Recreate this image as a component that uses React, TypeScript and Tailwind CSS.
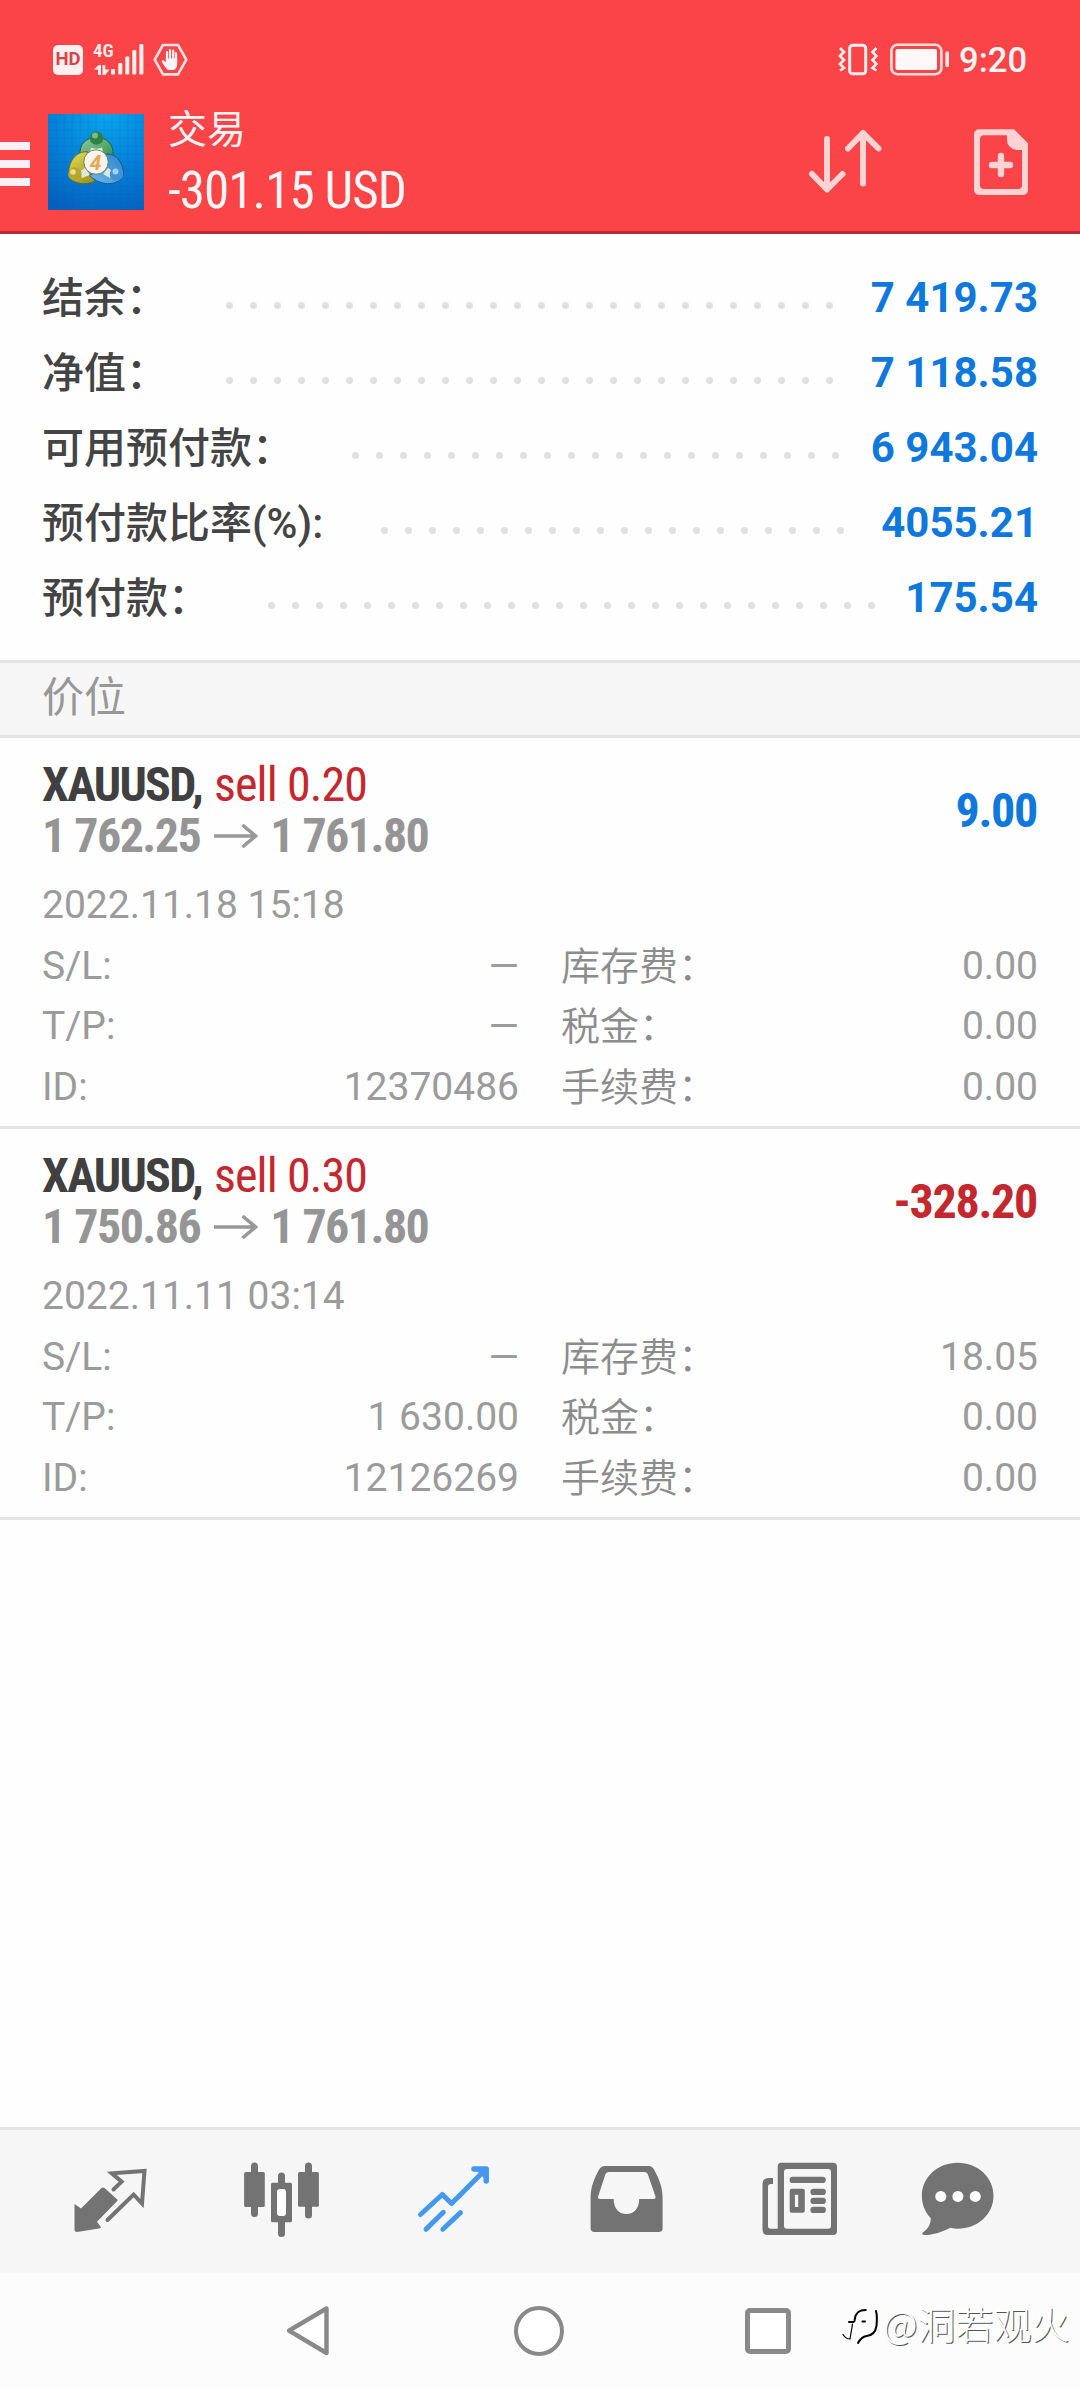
import type { ReactNode } from "react";

const summary = [
    { label: "结余：", value: "7 419.73", dots: 26 },
    { label: "净值：", value: "7 118.58", dots: 26 },
    { label: "可用预付款：", value: "6 943.04", dots: 21 },
    { label: "预付款比率(%):", value: "4055.21", dots: 20 },
    { label: "预付款：", value: "175.54", dots: 26 },
];

const positions = [
    {
        symbol: "XAUUSD,",
        action: "sell 0.20",
        open: "1 762.25",
        current: "1 761.80",
        profit: "9.00",
        time: "2022.11.18 15:18",
        left: [
            ["S/L:", "—"],
            ["T/P:", "—"],
            ["ID:", "12370486"],
        ],
        right: [
            ["库存费：", "0.00"],
            ["税金：", "0.00"],
            ["手续费：", "0.00"],
        ],
    },
    {
        symbol: "XAUUSD,",
        action: "sell 0.30",
        open: "1 750.86",
        current: "1 761.80",
        profit: "-328.20",
        time: "2022.11.11 03:14",
        left: [
            ["S/L:", "—"],
            ["T/P:", "1 630.00"],
            ["ID:", "12126269"],
        ],
        right: [
            ["库存费：", "18.05"],
            ["税金：", "0.00"],
            ["手续费：", "0.00"],
        ],
    },
];

function StatusBar() {
    return (
        <div className="flex h-[76px] pt-[43px] pl-[53px] pr-[53px]">
            <div className="mt-[2px] flex h-[30px] w-[30px] items-center justify-center rounded-[5px] bg-[#fff0f0] text-[18.5px] font-bold text-[#d8434a]">
                HD
            </div>
            <div className="ml-[10px] flex w-[18px] flex-col items-start">
                <span className="h-[20px] font-['Roboto_Condensed'] text-[19px] leading-[15px] font-semibold text-[#ffecec]">4G</span>
                <svg className="mt-[1px] ml-[1px]" width="16" height="12" viewBox="0 0 16 12" fill="#ffecec">
                    <path d="M0 5.5 4.6 1H7v10H4V5.5zM8.500 1h2.800v4.500H15.500L11.300 11H8.500z" />
                </svg>
            </div>
            <svg width="33" height="32" viewBox="0 0 33 32" fill="#fff0f0">
                <rect x="0" y="26" width="4" height="5.500" rx="1" />
                <rect x="7.300" y="20" width="4" height="11.500" rx="1" />
                <rect x="14.300" y="13.500" width="4" height="18" rx="1" />
                <rect x="21.300" y="7" width="4" height="24.500" rx="1" />
                <rect x="28.400" y="1" width="4" height="30.500" rx="1" />
            </svg>
            <svg className="ml-[9px]" width="35" height="33" viewBox="0 0 35 33" fill="none">
                <path d="M10 2h15l8.300 14.700L25 31.400H10L1.700 16.700z" stroke="#ffe3e3" strokeWidth="2.600" strokeLinejoin="round" />
                <path d="M14 9v9M17 7v10M20.200 7.500v10M23 10v9" stroke="#fff5f5" strokeWidth="2.200" strokeLinecap="round" />
                <path d="M12.800 15.500h11.400V21c0 3.400-1.800 6-4.200 6h-4.200c-2.200-.3-4.300-3.500-7-8.200-.5-1 1-2.200 2-1.300l2 1.900z" fill="#fff5f5" />
            </svg>
            <div className="grow" />
            <svg width="40" height="33" viewBox="0 0 40 33" fill="none" stroke="#fff0f0">
                <rect x="11.700" y="2.200" width="16" height="28.500" rx="3" strokeWidth="3" />
                <path d="M2 6l4 4-4 4 4 4-4 4 4 4-4 2.500M38.500 6l-4 4 4 4-4 4 4 4-4 4 4 2.500" transform="translate(0 -1)" strokeWidth="2.600" />
            </svg>
            <svg className="ml-[12px]" width="60" height="33" viewBox="0 0 60 33" fill="none">
                <rect x="1.400" y="1.800" width="50" height="29.400" rx="6" stroke="#ffdede" strokeWidth="2.600" />
                <rect x="5.500" y="6" width="41.500" height="21" rx="2" fill="#fff8f8" />
                <path d="M57.200 10v12.500" stroke="#ffe6e6" strokeWidth="3.600" strokeLinecap="round" />
            </svg>
            <span className="ml-[9px] text-[34.5px] leading-[35px] font-medium">9:20</span>
        </div>
    );
}

function AppLogo() {
    return (
        <svg className="mt-[38px] ml-[18px] shrink-0" width="96" height="96" viewBox="0 0 96 96">
            <defs>
                <radialGradient id="sky" cx="0.6" cy="0" r="1.1">
                    <stop offset="0" stopColor="#0aa6ee" />
                    <stop offset="0.5" stopColor="#0682d8" />
                    <stop offset="1" stopColor="#0560bd" />
                </radialGradient>
                <linearGradient id="green" x1="0" y1="0" x2="1" y2="1">
                    <stop offset="0" stopColor="#8ccba4" />
                    <stop offset="1" stopColor="#2b8a41" />
                </linearGradient>
                <linearGradient id="yellow" x1="0" y1="0" x2="0.6" y2="1">
                    <stop offset="0" stopColor="#e6df58" />
                    <stop offset="1" stopColor="#a19a1c" />
                </linearGradient>
                <linearGradient id="blue" x1="1" y1="0" x2="0" y2="1">
                    <stop offset="0" stopColor="#2f83c8" />
                    <stop offset="1" stopColor="#6cb9ea" />
                </linearGradient>
            </defs>
            <rect width="96" height="96" fill="url(#sky)" />
            <path d="M8 0v96M16 0v96M24 0v96M32 0v96M40 0v96M48 0v96M56 0v96M64 0v96M72 0v96M80 0v96M88 0v96M0 8h96M0 16h96M0 24h96M0 32h96M0 40h96M0 48h96M0 56h96M0 64h96M0 72h96M0 80h96M0 88h96" stroke="#0a5fae" strokeOpacity="0.15" />
            <path d="M32 42C31 30 38 23.500 48.500 23.500S66 30 65 42L56 50H40z" fill="url(#green)" stroke="#1d6146" strokeWidth="1" />
            <path d="M40 38C28 36 19 49 21 62c3 8 17 10 26 5l-6-12z" fill="url(#yellow)" stroke="#5d6a25" strokeWidth="1" />
            <path d="M58 40c11-1 18 11 17.500 21C72 71 54 74 41 61l15-5z" fill="url(#blue)" stroke="#195a97" strokeWidth="1" />
            <path d="M43 33.500c3 1.500 8 1.500 11 0l1 4H42z" fill="#dcebd0" />
            <path d="M31 58l6-4 5 7-8 3zM66 58l-6-4-5 6 7 4z" fill="#dce9dc" />
            <circle cx="48.500" cy="24" r="6.800" fill="#2e8246" />
            <circle cx="47" cy="21.500" r="3" fill="#7dba86" />
            <circle cx="27" cy="60" r="6.800" fill="#b8a62c" />
            <circle cx="25" cy="58" r="2.800" fill="#ebe08a" />
            <circle cx="68.500" cy="60" r="6.800" fill="#4292d6" />
            <circle cx="67.500" cy="57.500" r="3" fill="#9dd2f3" />
            <circle cx="48" cy="48" r="12.200" fill="#f8f4ef" stroke="#5a6b4a" strokeWidth="0.800" />
            <text x="47.500" y="55.500" textAnchor="middle" fontSize="21" fontWeight="700" fontStyle="italic" fontFamily="Roboto" fill="#eda552">
                4
            </text>
        </svg>
    );
}

function Header() {
    return (
        <header className="h-[234px] border-b-[3px] border-[#b62c33] bg-[#fa4448] text-[#fff5f5]">
            <StatusBar />
            <div className="flex">
                <div className="mt-[66px] flex w-[30px] flex-col gap-[10px]">
                    <div className="h-[8px] bg-[#fbeff8]" />
                    <div className="h-[8px] bg-[#fbeff8]" />
                    <div className="h-[8px] bg-[#fbeff8]" />
                </div>
                <AppLogo />
                <div className="mt-[25px] ml-[24px] grow">
                    <div className="text-[39px] leading-[58px]">交易</div>
                    <div className="mt-[3px] font-['Roboto_Condensed'] text-[51px] leading-[58px] tracking-[-0.9px]">-301.15 USD</div>
                </div>
                <svg className="mt-[52px]" width="76" height="68" viewBox="0 0 76 68" fill="none" stroke="#ffd2d3" strokeWidth="6" strokeLinecap="round" strokeLinejoin="round">
                    <path d="M20 11v50M5 46l15 15.500L35.500 46M56 55.500V6M41 20.500L56 5l15.500 15.500" />
                </svg>
                <svg className="mt-[52px] mr-[50px] ml-[89px]" width="58" height="70" viewBox="0 0 58 70">
                    <path fillRule="evenodd" fill="#ffd2d3" d="M7 1.300h35L56 15.300V62a5 5 0 0 1-5 5H7a5 5 0 0 1-5-5V6.300a5 5 0 0 1 5-5zM12 7.300a4 4 0 0 0-4 4V57a4 4 0 0 0 4 4h34a4 4 0 0 0 4-4V22h-5A10 10 0 0 1 35 12V7.300z" />
                    <path d="M29 28v18M20 37h18" stroke="#ffd2d3" strokeWidth="6.400" strokeLinecap="round" />
                </svg>
            </div>
        </header>
    );
}

function Position({ item }: { item: (typeof positions)[number] }) {
    return (
        <section className="h-[391px] border-b-[3px] border-[#e4e4e4] px-[42px] pt-[21px] text-[#959595]">
            <div className="flex items-center justify-between font-['Roboto_Condensed'] text-[48px] leading-[51px] font-bold">
                <div>
                    <div className="flex gap-[12px] text-[#404040] tracking-[-1.7px]">
                        <span>{item.symbol}</span>
                        <span className="font-normal tracking-[-0.9px] text-[#c4272d]">{item.action}</span>
                    </div>
                    <div className="flex items-center tracking-[-1.55px]">
                        {item.open}
                        <svg className="mr-[11px] ml-[13px]" width="46" height="26" viewBox="0 0 46 26" fill="none" stroke="#999" strokeWidth="3.600">
                            <path d="M1 13h41M29.500 2l13 11-13 11" />
                        </svg>
                        {item.current}
                    </div>
                </div>
                <div className={item.profit.startsWith("-") ? "mr-[1px] tracking-[-1.3px] text-[#c4272d]" : "mr-[1px] tracking-[-1.3px] text-[#0e78dc]"}>
                    {item.profit}
                </div>
            </div>
            <div className="mt-[14px] text-[39px] text-[#9b9b9b]">
                <div className="leading-[60.5px]">{item.time}</div>
                <div className="grid grid-cols-2 gap-x-[42px] leading-[60.5px]">
                    <div>
                        {item.left.map(([label, value]) => (
                            <div key={label} className="flex h-[60.5px] justify-between">
                                <span>{label}</span>
                                <span>{value}</span>
                            </div>
                        ))}
                    </div>
                    <div>
                        {item.right.map(([label, value]) => (
                            <div key={label} className="flex h-[60.5px] justify-between">
                                <span className="pt-px font-[350] text-[#8c8c8c]">{label}</span>
                                <span>{value}</span>
                            </div>
                        ))}
                    </div>
                </div>
            </div>
        </section>
    );
}

function TabIcon({ viewBox, children }: { viewBox: string; children: ReactNode }) {
    return (
        <div className="flex w-[172px] justify-center pt-[30px] last:w-[148px]">
            <svg width="80" height="80" viewBox={viewBox} fill="none">
                {children}
            </svg>
        </div>
    );
}

function TabBar() {
    return (
        <nav className="flex h-[146px] border-t-[3px] border-[#e4e4e4] bg-[#f6f6f6] pl-[24px] text-[#737373]">
            <TabIcon viewBox="70 50 80 80">
                <path d="M113.500 79.500L121.600 71.700 111.800 63.300 144.500 61 142 93.500 133.600 84.500 107.500 110" stroke="currentColor" strokeWidth="4" strokeLinecap="round" />
                <path d="M74.500 94L81 98.500 101.500 78q1.500-1.200 3 0L117 89.300q1 1 0 2L97 111.700l4 5.600q-1 1.200-2 1.200L77 122q-2.500 0-2.500-2z" fill="currentColor" />
            </TabIcon>
            <TabIcon viewBox="242 50 80 80">
                <rect x="244.100" y="62" width="20.700" height="35" rx="1.500" fill="currentColor" />
                <path d="M254.500 56v47.500M308.500 56v49M281.500 66v8M281.500 110v13.500" stroke="currentColor" strokeWidth="7" strokeLinecap="round" />
                <rect x="298" y="62" width="20.900" height="34.700" rx="1.500" fill="currentColor" />
                <rect x="271" y="72.700" width="21" height="39.500" rx="1.500" fill="currentColor" />
                <rect x="277" y="79" width="9" height="27" rx="3" fill="#fff" />
            </TabIcon>
            <TabIcon viewBox="414 50 80 80">
                <path d="M420.500 104.500L442.300 84.500 451.600 93.500 485 60M426 119.300L443.300 102.300M442.800 119.300L460.500 102.600" stroke="#4499ee" strokeWidth="5" strokeLinecap="round" strokeLinejoin="round" />
                <path d="M474 59H486.200V71" stroke="#4499ee" strokeWidth="5.500" strokeLinecap="round" strokeLinejoin="round" />
                <path d="M476 60h10v10z" fill="#4499ee" />
            </TabIcon>
            <TabIcon viewBox="586 50 80 80">
                <path
                    fillRule="evenodd"
                    fill="currentColor"
                    d="M605 56h44q3 0 5 3.500c5 9 8.600 18 8.600 28V118q0 4-4 4H594.600q-4 0-4-4V87.500c0-10 3.500-19 8.500-28q2-3.500 5.900-3.500zM609 62q-2.500 0-3.500 2l-7.400 22.500q-.5 2.500 2 2.500H613.700c0 9 5 15 12.700 15s12.800-6 12.800-15H653.500q2.500 0 2-2.500L647.700 64q-1-2-3.500-2z"
                />
            </TabIcon>
            <TabIcon viewBox="758 50 80 80">
                <path fillRule="evenodd" fill="currentColor" d="M781 52.700h52q4 0 4 4V121q0 4-4 4H768q-5.500 0-5.500-5.500V74q0-6 6-6h4.500v6h-2q-3 0-3 3v39q0 2.700 2.700 2.700h7V56.700q0-4 3.300-4zM787 59q-3 0-3 3v53.700q0 3 3 3h41q3 0 3-3V62q0-3-3-3z" />
                <path d="M792.700 69.900h30M813.500 81.900h9.300M813.500 90.900h9.300M813.500 99.900h9.300" stroke="currentColor" strokeWidth="6.200" strokeLinecap="round" />
                <path fillRule="evenodd" fill="currentColor" d="M791.700 78.700h11.100q2 0 2 2v20q0 2-2 2h-11.100q-2 0-2-2v-20q0-2 2-2zM794.900 84.700V97h3.300V84.700z" />
            </TabIcon>
            <TabIcon viewBox="918 50 80 80">
                <path fill="currentColor" d="M957.700 52.700c20 0 35.800 14.500 35.800 33s-15.800 33-35.800 33q-3.500 0-7.200-1c-8 4-17 7.300-26.500 7.300q-3-.5-1-2.700c5-3 7.800-8.300 7.800-14-6-6.500-8.900-14-8.900-22.600 0-18.500 15.800-33 35.800-33z" />
                <circle cx="940.800" cy="86.400" r="5.500" fill="#fff" />
                <circle cx="957.900" cy="86.400" r="5.500" fill="#fff" />
                <circle cx="975.300" cy="86.400" r="5.500" fill="#fff" />
            </TabIcon>
        </nav>
    );
}

function SystemBar() {
    return (
        <div className="relative flex h-[115px] bg-[#fcfcfc] pt-[32px] pl-[193px]">
            <div className="flex w-[230px] justify-center">
                <svg width="46" height="52" viewBox="0 0 46 52" fill="#fff" stroke="#898989" strokeWidth="4.400" strokeLinejoin="round">
                    <path d="M4 25.700L41.500 3.500v44.500z" />
                </svg>
            </div>
            <div className="flex w-[230px] justify-center">
                <div className="mt-[1px] ml-[2px] h-[50px] w-[50px] rounded-full border-[4.500px] border-[#898989] bg-white" />
            </div>
            <div className="flex w-[230px] justify-center">
                <div className="mt-[3px] h-[46px] w-[46px] rounded-[5px] border-[5px] border-[#898989] bg-white" />
            </div>
            {/* Author mark stamped over the corner */}
            <div className="absolute top-[27px] left-[840px] flex items-center text-white">
                <svg width="42" height="46" viewBox="0 0 42 46" fill="none" stroke="#000" strokeLinecap="round">
                    <path d="M9 22h4.500c1.200 0 1-1 1.300-3 .8-5.500 3.200-9 11-9" strokeWidth="2" />
                    <path d="M22.500 21.600h2.500" strokeWidth="2" />
                    <path d="M36 11c1.400 5 1 10 .5 15-1 6-4 9.500-10 10-4 .6-6 2.500-8.500 7" strokeWidth="2" />
                    <path d="M3 34.500c1.500 2.500 4 4.500 7 4.500l2.500-15" strokeWidth="1.200" />
                </svg>
                <span className="ml-[1px] font-['Noto_Sans_CJK_SC'] text-[38px] leading-[44px] font-light whitespace-nowrap text-white [text-shadow:1px_1px_0_#555]">
                    @洞若观火
                </span>
            </div>
        </div>
    );
}

export default function App() {
    return (
        <div className="flex h-[2388px] w-[1080px] flex-col overflow-hidden bg-[#fefefe] font-['Roboto','Noto_Sans_CJK_SC',sans-serif]">
            <Header />
            <div className="px-[42px] pt-[26px] pb-[25px]">
                {summary.map((row) => (
                    <div key={row.label} className="flex h-[75px] text-[42px] leading-[75px]">
                        <span className="pt-px font-medium text-[#444]">{row.label}</span>
                        <div className="ml-[58px] flex grow gap-[17px] pt-[42px]">
                            {Array.from({ length: row.dots }, (_, i) => (
                                <i key={i} className="h-[7px] w-[7px] shrink-0 rounded-full bg-[#e0e0e0]" />
                            ))}
                        </div>
                        <span className="font-bold text-[#0e78dc]">{row.value}</span>
                    </div>
                ))}
            </div>
            <div className="h-[78px] border-y-[3px] border-[#e4e4e4] bg-[#f6f6f6] px-[42px] text-[42px] leading-[70px] text-[#979797]">价位</div>
            {positions.map((item) => (
                <Position key={item.time} item={item} />
            ))}
            <div className="grow" />
            <TabBar />
            <SystemBar />
        </div>
    );
}
